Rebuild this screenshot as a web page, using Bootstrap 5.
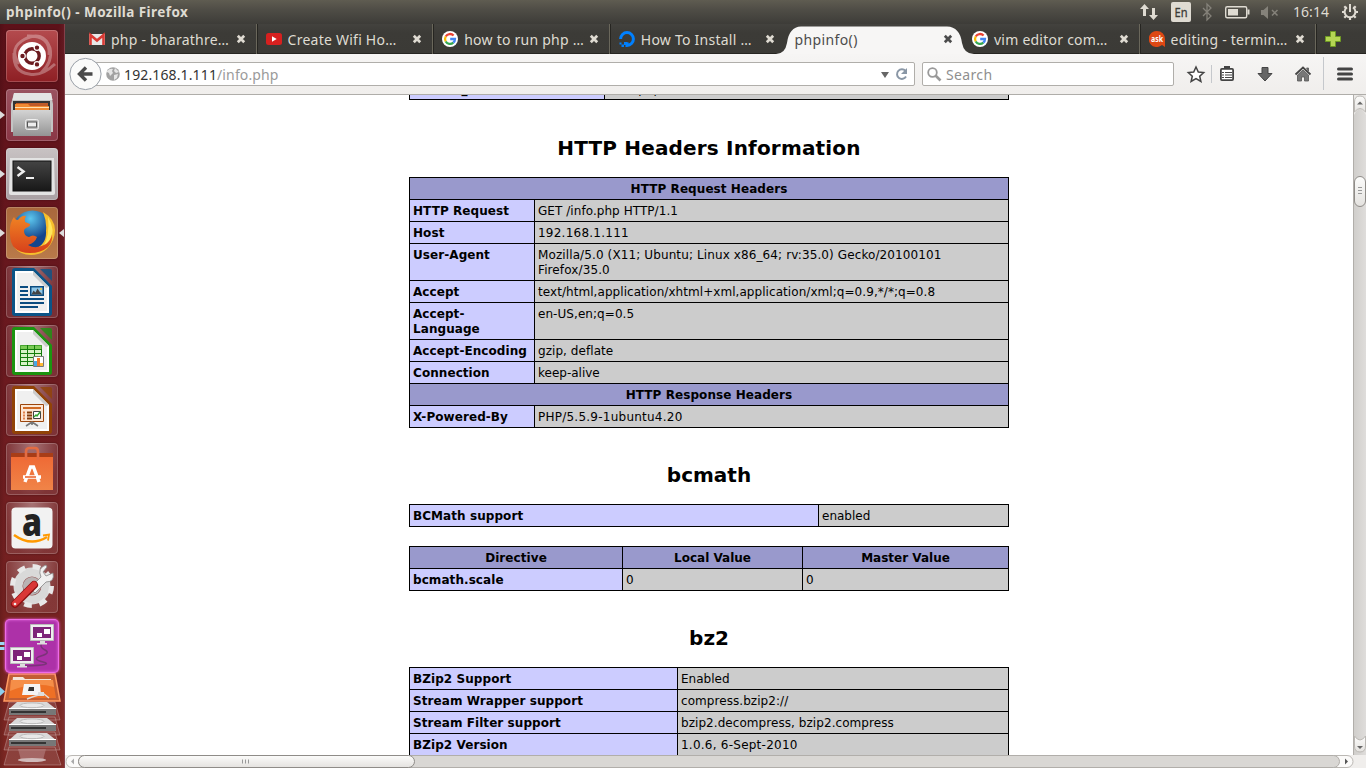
<!DOCTYPE html>
<html lang="en">
<head>
<meta charset="utf-8">
<title>phpinfo() - Mozilla Firefox</title>
<link href="https://cdn.jsdelivr.net/npm/bootstrap@5.3.0/dist/css/bootstrap.min.css" rel="stylesheet">
<style>
body{height:768px;font-family:"Noto Sans","Open Sans",sans-serif;font-size:14px;color:#000;background:#fff}
svg{display:block;flex:none}
.panel{height:24px;background:linear-gradient(#5f5c51,#4f4d46 40%,#3d3c38);color:#dfdbd2;line-height:24px}
.panel .wintitle{font-weight:700;font-size:13.5px;width:190px;padding-left:6px;white-space:nowrap;letter-spacing:.43px}
.launcher{width:65px;background:linear-gradient(90deg,rgba(0,0,0,.12),transparent 8%,transparent 92%,rgba(255,255,255,.04)),linear-gradient(#5d1119,#6b191f 45%,#7d2722);border-right:1px solid #84404a;padding-top:6px;gap:7px}
.tile{width:52px;height:52px;border-radius:4px;background:radial-gradient(ellipse at 50% 0,rgba(255,255,255,.38),rgba(255,255,255,.1) 75%);box-shadow:inset 0 0 0 1px rgba(255,255,255,.2),0 0 2px rgba(0,0,0,.4);margin-left:6px}
.t-dash{background:linear-gradient(#b44b4e,#8e1f24)}
.t-files{background:linear-gradient(#9a5260,#8a3645)}
.t-term{background:linear-gradient(#c8c2c3,#a9a0a3)}
.t-fox{background:linear-gradient(#a9683c,#b97a4a)}
.t-work{background:#ad31a8;box-shadow:0 0 0 1px #ef6ae8,0 0 3px 1px #f25ff0,inset 0 0 3px #e970e4}
.pip{position:absolute;left:-6px;top:21px}
.pipr{position:absolute;left:53px;top:21px}
.tabstrip{height:30px;background:linear-gradient(#43423e,#3c3b37 30%,#3b3a36);padding-left:15px;border-bottom:1px solid #272622}
.tabitem{width:176.6px;height:30px;padding:0 10px 0 9px;color:#dfdbd2;border-right:1px solid #6a675b;box-shadow:1px 0 #262521}
.tabitem .lbl{width:125px;margin-left:6px;white-space:nowrap;letter-spacing:.24px}
.tabitem.cur{color:#4c4c4c;border:0;box-shadow:none;padding-left:8px}
.tabitem.cur .lbl{margin-left:0;width:146px;letter-spacing:.4px}
.tabitem.nosep{border-color:transparent;box-shadow:none}
.curbg{position:absolute;left:-10px;top:2px}
.toolbar{height:41px;background:linear-gradient(#f6f5f4,#f0eeec);border-bottom:1px solid #afada9;padding:0 10px 0 4px}
.backbtn{z-index:1;margin-right:-17px}
.field{height:24px;background:#fff;border:1px solid #b0aeaa;border-radius:2px}
.urlbox{width:830px;padding:0 3px 0 20px}
.urltext{margin-left:4px;color:#9a9a9a;letter-spacing:.13px}
.urlhost{color:#333}
.srch{width:252px;margin-left:7px;padding-left:4px;color:#8f8f8f;letter-spacing:.35px}
.view{width:1288px;height:660px;font-family:"DejaVu Sans",sans-serif}
.doc{width:600px;margin-left:344px}
.doc h2{font-size:20px;font-weight:700;text-align:center;line-height:24px;margin:35px 0 17px}
.info{width:600px;table-layout:fixed;border-collapse:collapse;font-size:12px;line-height:15px;background:#ccc}
.info td,.info th{border:1px solid #000;padding:4px 3px 2px;vertical-align:top}
.info tr>:first-child{background:#ccf;font-weight:700;letter-spacing:.07px}
.info tr.hd>th{background:#99c!important;text-align:center;font-weight:700}
.ls1{letter-spacing:.06px}.ls2{letter-spacing:.11px}.ls3{letter-spacing:.24px}
.vbar{width:13px;background:linear-gradient(90deg,#d0cecb,#dfdddb);border-left:1px solid #b1aeaa}
.hbar{height:13px}
</style>
</head>
<body class="d-flex flex-column overflow-hidden">
<svg width="0" height="0" class="position-absolute"><defs>
<symbol id="x" viewBox="0 0 10 10"><path d="M1.800 1.800 8.200 8.200M8.200 1.800 1.800 8.200" stroke="currentColor" stroke-width="2.700"/></symbol>
<symbol id="g" viewBox="0 0 16 16"><circle cx="8" cy="8" r="8" fill="#fff"/><g fill="none" stroke-width="2.300"><path d="M3.700 5.500A5 5 0 0 1 11.600 4.500" stroke="#ea4335"/><path d="M3.700 5.500A5 5 0 0 0 3.700 10.500" stroke="#fbbc05"/><path d="M3.700 10.500A5 5 0 0 0 11.300 11.700" stroke="#34a853"/><path d="M11.300 11.700A5 5 0 0 0 13 8H8.200" stroke="#4285f4"/></g></symbol>
<linearGradient id="mt" x2="0" y2="1"><stop stop-color="#d4d4d4"/><stop offset="1" stop-color="#949494"/></linearGradient>
<linearGradient id="dk" x2="0" y2="1"><stop stop-color="#444"/><stop offset="1" stop-color="#181818"/></linearGradient>
<linearGradient id="og" x2="0" y2="1"><stop stop-color="#ef6a35"/><stop offset="1" stop-color="#f08448"/></linearGradient>
<linearGradient id="kn" x2="0" y2="1"><stop stop-color="#fcfcfb"/><stop offset="1" stop-color="#e4e2df"/></linearGradient>
<radialGradient id="gl" cx=".45" cy=".2"><stop stop-color="#5cc6ee"/><stop offset="1" stop-color="#14458c"/></radialGradient>
<linearGradient id="fx" x2="0" y2="1"><stop stop-color="#f08423"/><stop offset="1" stop-color="#d7401b"/></linearGradient>
<symbol id="page" viewBox="0 0 52 52"><path d="M9 2h19l18 18v27q0 3-3 3H9q-3 0-3-3V5q0-3 3-3z" fill="currentColor"/><path d="M34 3h10q2 0 2 2v10z" fill="currentColor" opacity=".8"/><path d="M9 5h18l16 16v26H9z" fill="#fff"/><path d="M11 7h15l15 15v23H11z" fill="#f0f0f0"/><path d="M27 5 43 21 40 22 27 9z" fill="#ccc"/></symbol>
<symbol id="disk" viewBox="0 0 48 14"><path d="M9 0h30l9 7v5q0 1-1 1H2q-1 0-1-1V7z" fill="#d9d9d9"/><path d="M1 7h47v5q0 1-1 1H2q-1 0-1-1z" fill="#777"/><path d="M3 9h35v2H3z" fill="#333"/><path d="M1 6.500h47" stroke="#fff"/><ellipse cx="24" cy="3.300" rx="12" ry="2.400" fill="#e8e8e8" stroke="#bbb"/></symbol>
</defs></svg>

<header class="panel d-flex align-items-center">
  <div class="wintitle">phpinfo() - Mozilla Firefox</div>
  <svg class="ms-auto" width="230" height="24" viewBox="1136 0 230 24" font-family="Noto Sans,sans-serif">
    <g fill="#dfdbd2"><path d="M1140 9l4.500-5 4.500 5h-3v7h-3V9zM1149 15h3V8h3v7h3l-4.500 5z"/><rect x="1171" y="2" width="20" height="20" rx="2"/></g>
    <text x="1174.500" y="17" font-size="13" textLength="13" lengthAdjust="spacingAndGlyphs" fill="#3c3b37" stroke="#3c3b37" stroke-width=".3">En</text>
    <path d="M1203 8l8 8-4 4V4l4 4-8 8" fill="none" stroke="#85827a" stroke-width="1.300"/>
    <rect x="1225.700" y="6.700" width="21" height="11" rx="1.500" fill="none" stroke="#dfdbd2" stroke-width="1.400"/><path d="M1228 9h10v6.500h-10zM1247.500 9.500h2v5h-2z" fill="#dfdbd2"/>
    <path d="M1261 10h2.500l4.500-4v13l-4.500-4h-2.500z" fill="#85827a"/><path d="M1272 10l5.500 5.500M1277.500 10l-5.500 5.500" stroke="#85827a" stroke-width="1.500"/>
    <text x="1293" y="17" font-size="14" textLength="36" fill="#dfdbd2">16:14</text>
    <g fill="none" stroke="#dfdbd2"><path d="M1347 7.300A5.400 5.400 0 1 0 1353 7.300" stroke-width="2"/><path d="M1350 4v8" stroke-width="2"/><path d="M1342 12h2.500M1355.500 12h2.500M1344.300 6.300l2 2M1355.700 6.300l-2 2M1344.300 17.700l2-2M1355.700 17.700l-2-2M1350 17v3" stroke-width="2.200"/></g>
  </svg>
</header>

<div class="d-flex flex-grow-1">
<nav class="launcher d-flex flex-column flex-shrink-0 overflow-hidden">
  <div class="tile t-dash"><svg width="52" height="52"><g fill="none" stroke="#fff" opacity=".3" stroke-width="3"><path d="M13 34Q2 18 19 9 37 0 44 18 47 32 35 43M21 6Q45 5 43 25M8 23Q7 42 23 44 35 47 49 34"/></g><circle cx="26" cy="26" r="14" fill="#fff"/><circle cx="26" cy="26" r="7.200" fill="none" stroke="#6b1b20" stroke-width="3.400"/><g fill="#6b1b20" stroke="#fff" stroke-width="1.200"><circle cx="16.500" cy="26" r="2.800"/><circle cx="31" cy="17.600" r="2.800"/><circle cx="31" cy="34.400" r="2.800"/></g></svg></div>
  <div class="tile t-files position-relative"><svg width="52" height="52"><path d="M8 4h37l2 11v28H5V15z" fill="#c4c4c4"/><path d="M8 4h37l1.500 7h-40z" fill="#e4e4e4"/><path d="M7 12h37v10H7z" fill="#333"/><path d="M10 14h32v5H10z" fill="#bf5a28"/><path d="M9 15h13l2 2h19v5H9z" fill="#f08a32"/><path d="M9 18.500h34" stroke="#ffe0b0"/><path d="M7 21h38v26H7z" fill="url(#mt)"/><rect x="19.500" y="30.500" width="13" height="10" rx="2" fill="#bbb" stroke="#eee"/><rect x="21.500" y="33" width="9" height="5" fill="#eee" stroke="#555"/></svg><svg class="pip" width="5" height="10"><path d="M0 1l5 4-5 4z" fill="#ddd"/></svg></div>
  <div class="tile t-term position-relative"><svg width="52" height="52"><path d="M4 10h44l1 35q0 2-2 2H5q-2 0-2-2z" fill="#e3e3e3"/><rect x="7" y="13" width="38" height="30" fill="url(#dk)" stroke="#111"/><path d="M11.500 19l6 4.500-6 4.500" fill="none" stroke="#eee" stroke-width="2.500"/><path d="M20 30h8" stroke="#eee" stroke-width="2"/></svg><svg class="pip" width="5" height="10"><path d="M0 1l5 4-5 4z" fill="#ddd"/></svg></div>
  <div class="tile t-fox position-relative"><svg width="52" height="52"><circle cx="26.500" cy="24" r="20.500" fill="url(#gl)"/><path d="M37 5Q54 15 47 33 40 48 25 48 14 48 8 40L27 43Q41 38 40 24 41 15 37 5z" fill="#f6be2c"/><path d="M42 10Q50 23 44 34L37 40Q44 29 42 10z" fill="#ffe55b"/><path d="M8 10Q9 13 12 13 16 8 20 9 18 12 19 15l5 2q1 2-4 4-2 1-2 3 0 5 5 6 4-3 8 0-2 6-9 8 8 5 18-1 5-4 6-10 1 8-4 13-7 6-18 6Q4 46 4 27 3 16 8 10z" fill="url(#fx)"/></svg><svg class="pip" width="5" height="10"><path d="M0 1l5 4-5 4z" fill="#ddd"/></svg><svg class="pipr" width="5" height="10"><path d="M5 1 0 5l5 4z" fill="#ddd"/></svg></div>
  <div class="tile"><svg width="52" height="52"><use href="#page" color="#0b5487"/><g stroke="#0b4c80" stroke-width="2"><path d="M14 21h8M14 25h8M14 29h8M14 33h24M14 37h24M14 41h18"/></g><path d="M24 20h14v10H24z" fill="#0b4c80"/><path d="M25.500 21.500h11v7h-11z" fill="#8fc7e8"/><path d="M25.500 28.500l2-4 2 2 2-4 2 3 3 3z" fill="#444"/><circle cx="35" cy="23" r="1" fill="#fc3"/></svg></div>
  <div class="tile"><svg width="52" height="52"><use href="#page" color="#1c9410"/><path d="M14.500 20.500h21v20h-21z" fill="#d8f2c6" stroke="#147c0b"/><path d="M14.500 20.500h21v4h-21z" fill="#7bcc56"/><path d="M14 24.500h22M14 28.500h22M14 32.500h22M14 36.500h22M21.500 20v21M28.500 20v21" stroke="#147c0b"/><path d="M27.500 31.500h10v10h-10z" fill="#fff" stroke="#777"/><path d="M28 36h3v5h-3z" fill="#47a7e3"/><path d="M31 33h3v8h-3z" fill="#f07a25"/><path d="M34 38h3v3h-3z" fill="#fb3"/></svg></div>
  <div class="tile"><svg width="52" height="52"><use href="#page" color="#914307"/><path d="M14.500 20.500h23v17h-23z" fill="#fce6d4" stroke="#9c450b"/><path d="M17 24h18" stroke="#d06a25" stroke-width="2"/><path d="M17 28.500h2M17 31.500h2M17 34.500h2" stroke="#e0824d" stroke-width="1.800"/><path d="M21 28.500h5M21 31.500h5M21 34.500h5" stroke="#843c0c" stroke-width="1.800"/><path d="M27.500 27.500h7v7h-7z" fill="#fff" stroke="#444"/><path d="M28 33l2-2 1 1 3-4" stroke="#2fa52f" fill="none" stroke-width="1.400"/><path d="M26 38l-6 4M26 38l6 4M26 38v3" stroke="#777" stroke-width="1.600"/></svg></div>
  <div class="tile"><svg width="52" height="52"><path d="M5 10h42v4H5z" fill="#a83d17"/><path d="M5 14h42v33H5z" fill="url(#og)"/><path d="M20 17V9q0-4 3-4h6q3 0 3 4v8" fill="none" stroke="#e36c43" stroke-width="2.600"/><path d="M19 39l5.500-15h3L33 39M17 34h18" fill="none" stroke="#fff" stroke-width="3.400"/><path d="M19 34h11" stroke="#e85d23" stroke-width="1.500"/></svg></div>
  <div class="tile"><svg width="52" height="52"><rect x="5.500" y="5.500" width="41" height="41" rx="4" fill="#f2f2f2"/><text x="16" y="34" font-family="Open Sans,sans-serif" font-weight="800" font-size="38" textLength="20" lengthAdjust="spacingAndGlyphs" fill="#222">a</text><path d="M8 33q17 12 33 2" fill="none" stroke="#f90" stroke-width="2.600"/><path d="M37 33.500l6-1-1 6" fill="none" stroke="#f90" stroke-width="1.800"/></svg></div>
  <div class="tile"><svg width="52" height="52"><circle cx="26" cy="25" r="14" fill="none" stroke="#d9d9d9" stroke-width="9"/><circle cx="26" cy="25" r="19.500" fill="none" stroke="#e8e8e8" stroke-width="5" stroke-dasharray="7.660 7.660"/><circle cx="26" cy="25" r="9" fill="#b9b4b4"/><path d="M24 27 35 16Q31 7 40 4l1 2-4 5 3 4 7-3q2 9-7 9L29 32z" fill="#f1f1f1" stroke="#888" stroke-width=".8"/><path d="M9 43 28 24" stroke="#8d1012" stroke-width="8" stroke-linecap="round"/><path d="M9 42.500 28 23.500" stroke="#d93737" stroke-width="6" stroke-linecap="round"/><circle cx="9" cy="43" r="1.300" fill="#eee"/></svg></div>
  <div class="tile t-work position-relative"><svg width="52" height="52"><path d="M36 23q-3 4 3 7t-4 6 2 6-18 4" fill="none" stroke="#7b3379" stroke-width="1.500"/><g id="mon"><path d="M24.500 4.500h23v16h-23z" fill="#eee" stroke="#bbb"/><path d="M27 7h18v11H27z" fill="#7d2479"/><path d="M38 9h6v5h-6zM31 13h5v4h-5z" fill="#fff"/><path d="M34 21h5v2h-5zM31 23h10v1.500H31z" fill="#ddd"/></g><use href="#mon" x="-20" y="23"/></svg><svg class="pip" width="5" height="12"><path d="M0 2.500h4.500M0 7.500h4.500" stroke="#9bd8f3" stroke-width="3"/></svg></div>
  <svg width="64" height="96" viewBox="0 672 64 96" class="flex-shrink-0" style="margin-top:-8px">
    <g fill="#fff" fill-opacity=".12" stroke="#fff" stroke-opacity=".25"><path d="M9 703h46l5 18H4zM9 718h46l5 18H4zM9 733h46l5 18H4zM9 748h46l6 18H4z"/></g>
    <path d="M18 750h28l-3 11H21z" fill="#b68080" opacity=".6"/><ellipse cx="32" cy="761" rx="14" ry="2" fill="#d0b9b9"/>
    <use href="#disk" x="8" y="703" width="48" height="14"/><use href="#disk" x="8" y="719" width="48" height="14"/><use href="#disk" x="8" y="734" width="48" height="14"/>
    <path d="M9 675h46l5 27H4z" fill="#c35e33" stroke="#ff9a62" stroke-width="1.500"/>
    <path d="M13 678h10l2 2h26l1 6H12z" fill="#f4e6da"/><path d="M11 681h42l3 18H9z" fill="#ee7025"/><path d="M11 681h42l1 7Q34 682 10 692z" fill="#f58e48"/>
    <path d="M24 685h16l1 11H22z" fill="#f4f4f4"/><path d="M29 688h5v4h-6z" fill="#333"/><path d="M27 700q10-4 13-4l4-1 5 4" fill="none" stroke="#ddd" stroke-width="1.500"/><path d="M38 693h6v4h-6z" fill="#ddd"/>
    <path d="M0 688l5 4.500-5 4.500z" fill="#8ed0ef"/>
  </svg>
</nav>

<main class="d-flex flex-column flex-grow-1">
  <div class="tabstrip d-flex">
    <div class="tabitem d-flex align-items-center"><svg width="16" height="16"><path d="M0 3h16v11H0z" fill="#e8e8e8"/><path d="M1.500 14V4L8 9.500 14.500 4v10" fill="none" stroke="#d93a34" stroke-width="2.600"/></svg><span class="lbl">php - bharathre…</span><svg width="10" height="10"><use href="#x"/></svg></div>
    <div class="tabitem d-flex align-items-center"><svg width="16" height="16"><rect y="2" width="16" height="12" rx="2.500" fill="#d6201f"/><path d="M6 5.300v5.400L10.700 8z" fill="#fff"/></svg><span class="lbl">Create Wifi Ho…</span><svg width="10" height="10"><use href="#x"/></svg></div>
    <div class="tabitem d-flex align-items-center"><svg width="16" height="16"><use href="#g"/></svg><span class="lbl">how to run php …</span><svg width="10" height="10"><use href="#x"/></svg></div>
    <div class="tabitem nosep d-flex align-items-center"><svg width="16" height="16"><path d="M1.600 8A6.400 6.400 0 1 1 8 14.400V11.200" fill="none" stroke="#0080ff" stroke-width="3"/><path d="M5 11h3v3H5zM2.500 13.500H5V16H2.500zM.5 11.500h2v2h-2z" fill="#0080ff"/></svg><span class="lbl">How To Install …</span><svg width="10" height="10"><use href="#x"/></svg></div>
    <div class="tabitem cur d-flex align-items-center position-relative"><svg class="curbg" width="198" height="28"><path d="M0 28Q9 28 11 17 13 1 25 .5H171Q184 1 186 17 188 28 198 28z" fill="#f7f6f5"/></svg><span class="lbl position-relative">phpinfo()</span><svg class="position-relative ms-auto" width="10" height="10"><use href="#x"/></svg></div>
    <div class="tabitem d-flex align-items-center"><svg width="16" height="16"><use href="#g"/></svg><span class="lbl">vim editor com…</span><svg width="10" height="10"><use href="#x"/></svg></div>
    <div class="tabitem d-flex align-items-center"><svg width="16" height="16"><path d="M8 0a8 8 0 0 1 8 8v8l-3-2A8 8 0 1 1 8 0z" fill="#dd4814"/><text x="2" y="11" font-size="8" font-weight="700" textLength="12" lengthAdjust="spacingAndGlyphs" fill="#fff">ask</text></svg><span class="lbl">editing - termin…</span><svg width="10" height="10"><use href="#x"/></svg></div>
    <svg class="align-self-center ms-2" width="18" height="18"><path d="M6.500 1.500h5v5h5v5h-5v5h-5v-5h-5v-5h5z" fill="#b5d654" stroke="#6f9a23"/></svg>
  </div>

  <div class="toolbar d-flex align-items-center">
    <svg class="backbtn" width="33" height="34"><circle cx="16.500" cy="17" r="15.600" fill="#fbfbfa" stroke="#9aa0a8"/><path d="M17 10.500 10.500 17l6.500 6.500M11 17h12.500" fill="none" stroke="#4a4a4a" stroke-width="3.400"/></svg>
    <div class="field urlbox d-flex align-items-center"><svg width="14" height="14"><circle cx="7" cy="7" r="6.800" fill="#a2a2a2"/><path d="M1 4Q4 1 7 2l-1 2 1 2-3 3-1-3-2-1zM9 1l4 4-3 1-2-2zM8 8l4-1-1 4-3 2z" fill="#e6e6e6"/></svg><span class="urltext text-nowrap"><span class="urlhost">192.168.1.111</span>/info.php</span>
      <svg class="ms-auto" width="30" height="22"><path d="M0 9h8l-4 6z" fill="#666"/><path d="M24.500 8A4.800 4.800 0 1 0 25 13.500" fill="none" stroke="#8a97a6" stroke-width="2"/><path d="M26 5v6h-6z" fill="#8a97a6"/></svg></div>
    <div class="field srch d-flex align-items-center"><svg width="15" height="15"><circle cx="5.500" cy="5.500" r="4.300" fill="none" stroke="#999" stroke-width="1.800"/><path d="M8.500 8.500l5 5" stroke="#999" stroke-width="2.600"/></svg><span class="ms-1">Search</span></div>
    <svg class="ms-auto" width="182" height="40" viewBox="1174 54 182 40"><path d="M1196 67l2.300 5 5.400.5-4 3.700 1.200 5.300-4.900-2.800-4.900 2.800 1.200-5.300-4-3.700 5.400-.5z" fill="#fff" stroke="#444" stroke-width="1.500"/><path d="M1211.500 65v18M1323.500 57v33" stroke="#c5c8cc"/><rect x="1220.900" y="68.900" width="12.200" height="11.200" rx="1" fill="#fff" stroke="#444" stroke-width="1.800"/><path d="M1224 66h6v3h-6z" fill="#444"/><path d="M1222 72.500h2M1225 72.500h7M1222 75h2M1225 75h7M1222 77.500h2M1225 77.500h7" stroke="#444" stroke-width="1.200"/><path d="M1262 67.500h6v6h4l-7 7.500-7-7.500h4z" fill="#666" stroke="#444"/><path d="M1295.500 74.500l7.500-7 7.500 7" fill="none" stroke="#444" stroke-width="1.800"/><path d="M1297.500 75l5.500-5 5.500 5v6h-4v-4h-3v4h-4zM1306.500 68h2v3z" fill="#777" stroke="#555" stroke-width=".8"/><path d="M1338.500 69h13M1338.500 74h13M1338.500 79h13" stroke="#444" stroke-width="3" stroke-linecap="round"/></svg>
  </div>

  <div class="d-flex">
    <div class="view overflow-hidden"><div class="doc">
      <table class="info" style="margin-top:-18px"><colgroup><col style="width:195px"><col></colgroup><tr><td>SCRIPT_NAME</td><td>/info.php</td></tr></table>
      <h2 style="margin-top:36px;letter-spacing:.17px">HTTP Headers Information</h2>
      <table class="info"><colgroup><col style="width:125px"><col></colgroup>
        <tr class="hd"><th colspan="2">HTTP Request Headers</th></tr>
        <tr><td>HTTP Request</td><td class="ls1">GET /info.php HTTP/1.1</td></tr>
        <tr><td>Host</td><td class="ls3">192.168.1.111</td></tr>
        <tr><td>User-Agent</td><td class="ls2">Mozilla/5.0 (X11; Ubuntu; Linux x86_64; rv:35.0) Gecko/20100101 Firefox/35.0</td></tr>
        <tr><td>Accept</td><td class="ls1">text/html,application/xhtml+xml,application/xml;q=0.9,*/*;q=0.8</td></tr>
        <tr><td>Accept-<br>Language</td><td class="ls1">en-US,en;q=0.5</td></tr>
        <tr><td class="text-nowrap">Accept-Encoding</td><td class="ls1">gzip, deflate</td></tr>
        <tr><td>Connection</td><td>keep-alive</td></tr>
        <tr class="hd"><th colspan="2">HTTP Response Headers</th></tr>
        <tr><td>X-Powered-By</td><td class="ls3">PHP/5.5.9-1ubuntu4.20</td></tr>
      </table>
      <h2>bcmath</h2>
      <table class="info"><colgroup><col style="width:409px"><col></colgroup><tr><td>BCMath support</td><td>enabled</td></tr></table>
      <table class="info" style="margin-top:19px"><colgroup><col style="width:213px"><col style="width:180px"><col></colgroup>
        <tr class="hd"><th>Directive</th><th>Local Value</th><th>Master Value</th></tr>
        <tr><td>bcmath.scale</td><td>0</td><td>0</td></tr></table>
      <h2>bz2</h2>
      <table class="info"><colgroup><col style="width:268px"><col></colgroup>
        <tr><td>BZip2 Support</td><td>Enabled</td></tr>
        <tr><td>Stream Wrapper support</td><td class="ls1">compress.bzip2://</td></tr>
        <tr><td>Stream Filter support</td><td class="ls1">bzip2.decompress, bzip2.compress</td></tr>
        <tr><td>BZip2 Version</td><td class="ls3">1.0.6, 6-Sept-2010</td></tr></table>
    </div></div>
    <div class="vbar"><svg width="12" height="660" viewBox="0 0 12 660"><path d="M0 0h12v20Q6 8 0 20z" fill="#eceae8"/><path d="M.5 17V7Q.500 1 6 1t5.500 6v10Q6 10 .5 17z" fill="url(#kn)" stroke="#bbb8b4"/><path d="M3 9.500h6l-3-3z" fill="#666"/><rect x=".5" y="81.500" width="11" height="30" rx="5.500" fill="url(#kn)" stroke="#8f8c88"/><path d="M4 92.500h4M4 95.500h4M4 98.500h4" stroke="#999"/><path d="M.5 641q5.500 8 11 0v10q0 6-5.500 6t-5.500-6z" fill="url(#kn)" stroke="#bbb8b4"/><path d="M3 651h6l-3 3z" fill="#666"/></svg></div>
  </div>
  <svg class="hbar" width="1301" height="13" viewBox="65 755 1301 13"><path d="M65 755h1301v13H65z" fill="#f0eeec"/><rect x="66" y="755.500" width="1287" height="12" rx="6" fill="#fbfaf9" stroke="#bbb8b4"/><rect x="78.500" y="755.500" width="1261" height="12" rx="6" fill="#d9d7d4" stroke="#b1aeaa"/><rect x="78.500" y="755.500" width="336" height="12" rx="6" fill="url(#kn)" stroke="#8f8c88"/><path d="M242.500 759.500v4M245.500 759.500v4M248.500 759.500v4" stroke="#999"/><path d="M74 758.500v6l-3-3z" fill="#aaa"/><path d="M1345 758.500v6l3-3z" fill="#555"/></svg>
</main>
</div>
<script src="https://cdn.jsdelivr.net/npm/bootstrap@5.3.0/dist/js/bootstrap.bundle.min.js"></script>
</body>
</html>
